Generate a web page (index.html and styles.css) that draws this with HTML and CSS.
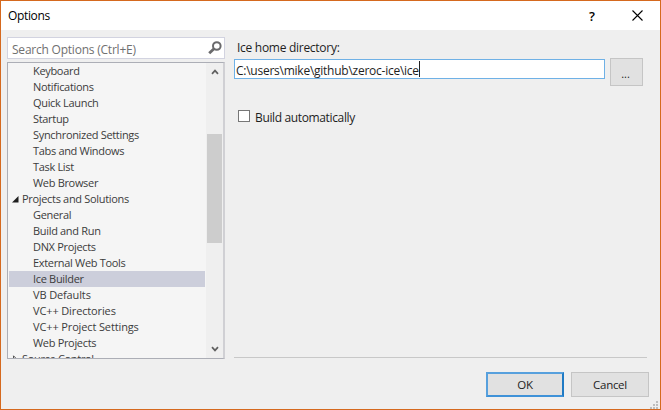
FILE: index.html
```html
<!DOCTYPE html>
<html lang="en">
<head>
<meta charset="utf-8">
<title>Options</title>
<link rel="stylesheet" href="styles.css">
</head>
<body>
<div class="window">
  <header class="titlebar">
    <span class="title">Options</span>
    <span class="help">?</span>
    <svg class="close" width="11" height="11" viewBox="0 0 11 11"><path d="M.5.5l10 10M10.500.5l-10 10" fill="none" stroke="#000" stroke-width="1.1"/></svg>
  </header>
  <main class="content">
    <section class="sidebar">
      <div class="search">
        <span>Search Options (Ctrl+E)</span>
        <svg width="14" height="14" viewBox="0 0 14 14" fill="none" stroke="#6a6a6c"><circle cx="8.800" cy="5" r="3.800" stroke-width="2"/><path d="M6 7.800L1.200 12.300" stroke-width="2.800"/></svg>
      </div>
      <div class="tree">
        <ul class="items">
          <li>Keyboard</li>
          <li>Notifications</li>
          <li>Quick Launch</li>
          <li>Startup</li>
          <li>Synchronized Settings</li>
          <li>Tabs and Windows</li>
          <li>Task List</li>
          <li>Web Browser</li>
          <li class="group"><svg width="7" height="7" viewBox="0 0 7 7"><path d="M6.500 0v6.500H0z" fill="#1e1e1e"/></svg>Projects and Solutions</li>
          <li>General</li>
          <li>Build and Run</li>
          <li>DNX Projects</li>
          <li>External Web Tools</li>
          <li class="selected">Ice Builder</li>
          <li class="wide">VB Defaults</li>
          <li class="wide">VC++ Directories</li>
          <li class="wide">VC++ Project Settings</li>
          <li>Web Projects</li>
          <li class="group"><svg width="7" height="8" viewBox="0 0 7 8"><path d="M1.500.8v6.400l3.200-3.200z" fill="none" stroke="#555"/></svg>Source Control</li>
        </ul>
        <div class="scrollbar">
          <svg width="8" height="6" viewBox="0 0 8 6"><path d="M1 4.800l3-3.200 3 3.200" fill="none" stroke="#606060" stroke-width="1.700"/></svg>
          <div class="thumb"></div>
          <svg width="8" height="6" viewBox="0 0 8 6"><path d="M1 1.200l3 3.200 3-3.200" fill="none" stroke="#606060" stroke-width="1.700"/></svg>
        </div>
      </div>
    </section>
    <section class="page">
      <div class="label">Ice home directory:</div>
      <div class="path-row">
        <div class="path"><span>C:\users\mike\github\zeroc-ice\ice</span><i class="caret"></i></div>
        <div class="button browse">...</div>
      </div>
      <div class="check"><i class="box"></i><span>Build automatically</span></div>
    </section>
  </main>
  <footer class="actions">
    <div class="button ok">OK</div>
    <div class="button">Cancel</div>
  </footer>
  <svg class="grip" width="8" height="8" viewBox="0 0 8 8" fill="#bdbdbd"><path d="M6 0h2v2H6zM3 3h2v2H3zM6 3h2v2H6zM0 6h2v2H0zM3 6h2v2H3zM6 6h2v2H6z"/></svg>
</div>
</body>
</html>
```
FILE: styles.css
```css
* { box-sizing: border-box; }
body { margin: 0; font-family: "Open Sans", "Noto Sans", sans-serif; color: #1e1e1e; }
svg { display: block; flex: none; }
.window {
  position: relative;
  width: 661px;
  height: 410px;
  border: 1px solid #d5691e;
  background: #efefef;
  overflow: hidden;
  white-space: nowrap;
}
.titlebar {
  display: flex;
  align-items: center;
  height: 29px;
  padding: 0 17px 0 7px;
  background: #fff;
  color: #000;
  font-size: 12px;
}
.title { flex: 1; letter-spacing: -0.35px; }
.help { width: 7px; margin-right: 36px; font-size: 13px; font-weight: 600; }
.content { display: flex; gap: 9px; height: 328px; padding: 7px 13px 0 6px; }
.sidebar { width: 218px; }
.search {
  display: flex;
  align-items: center;
  justify-content: space-between;
  height: 22px;
  margin-bottom: 3px;
  padding: 0 2px 0 4px;
  border: 1px solid #d2d3e0;
  background: #fff;
  color: #707070;
  font-size: 12px;
  letter-spacing: -0.22px;
}
.search span { padding-top: 2px; }
.tree {
  display: flex;
  height: 297px;
  border: 1px solid #acaeb6;
  border-right: 2px solid #d0d0d4;
  background: #f5f5f5;
  overflow: hidden;
}
.items {
  flex: 1;
  margin: 0;
  padding: 0 1px;
  list-style: none;
  color: #3c3c3c;
  font-size: 11px;
  line-height: 16px;
  letter-spacing: -0.32px;
}
.items li { height: 16px; padding-left: 24px; }
.items .wide { letter-spacing: -0.13px; }
.items .selected { background: #cccedb; }
.items .group { display: flex; align-items: center; gap: 3px; padding-left: 3px; }
.scrollbar {
  display: flex;
  flex-direction: column;
  align-items: center;
  width: 17px;
  padding: 6px 0;
  background: #efefef;
}
.thumb { width: 15px; height: 109px; margin: 59px 0 auto; background: #cdcdcd; }
.page { flex: 1; height: 321px; border-bottom: 1px solid #c8c8c8; font-size: 12px; }
.label { height: 22px; padding-left: 3px; line-height: 21px; letter-spacing: -0.28px; }
.path-row { display: flex; gap: 5px; }
.path {
  display: flex;
  align-items: center;
  width: 371px;
  height: 20px;
  border: 1px solid #6fb1e6;
  padding-left: 1px;
  background: #fff;
  letter-spacing: -0.25px;
}
.path span { padding-top: 2px; }
.caret { width: 1px; height: 16px; background: #222; }
.button {
  display: flex;
  align-items: center;
  justify-content: center;
  width: 78px;
  height: 25px;
  border: 1px solid #c5c5c5;
  background: #e1e1e1;
  font-size: 11.500px;
  letter-spacing: -0.3px;
}
.browse { width: 33px; height: 28px; margin-top: -1px; padding: 2px 2px 0 0; font-size: 11px; letter-spacing: 0; }
.check { display: flex; align-items: center; gap: 5px; height: 16px; margin: 22px 0 0 4px; letter-spacing: -0.36px; }
.check span { padding-top: 2px; }
.box { width: 12px; height: 12px; border: 1px solid #777; background: #fff; }
.actions { display: flex; justify-content: flex-end; gap: 7px; padding: 14px 11px 0 0; }
.ok { border: 2px solid #3f92d8; border-color: #57a0dd #1f7ac4 #3f92d8 #57a0dd; }
.grip { position: absolute; right: 2px; bottom: 0; }
```
